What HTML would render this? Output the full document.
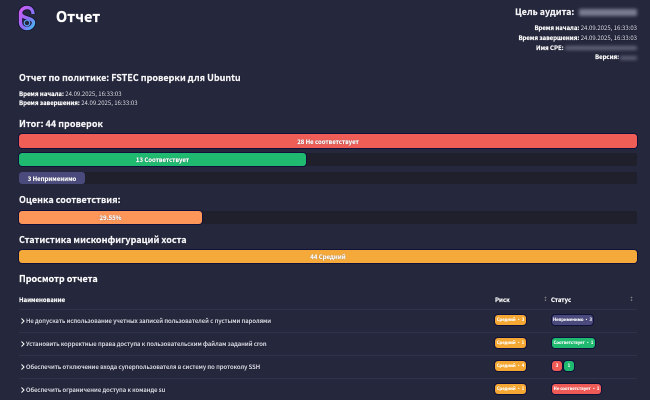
<!DOCTYPE html>
<html lang="ru"><head><meta charset="utf-8"><title>Отчет</title>
<style>
html,body{margin:0;padding:0;width:650px;height:400px;overflow:hidden;background:#25273c;}
body{position:relative;font-family:"Noto Sans CJK SC","DejaVu Sans",sans-serif;color:#fff;}
.t{position:absolute;white-space:nowrap;line-height:1;text-shadow:0 0 1px #05051a;}
.b{font-weight:700}
.h{font-size:9px;font-weight:700;color:#f6f6f8;-webkit-text-stroke:.2px #f6f6f8}
.s{font-size:6px;color:#e8e8ee}
.s b{font-weight:700;color:#fff;-webkit-text-stroke:.2px #fff}
.r{text-align:right;right:13px}
.track{position:absolute;left:19px;width:618px;background:#1f202c;border-radius:2px}
.bar{position:absolute;left:19px;border-radius:3px;box-shadow:0 0 0 1px #10113a;font-size:6px;font-weight:700;color:#fff;text-align:center;text-shadow:0 0 1px rgba(0,0,30,.6);display:flex;align-items:center;justify-content:center;-webkit-text-stroke:.15px #fff}
.line{position:absolute;left:19px;width:618px;height:1px;background:#30324c}
.row{position:absolute;left:19px;font-size:5.9px;font-weight:500;color:#e2e2ea;white-space:nowrap;line-height:1;text-shadow:0 0 1px #05051a;-webkit-text-stroke:.1px #e2e2ea}
.row svg{position:absolute;left:1px;top:0}
.row span{margin-left:7px}
.pill{position:absolute;height:10px;border-radius:3px;box-shadow:0 0 0 1px #10113a;font-size:4.2px;color:#fff;display:flex;align-items:center;justify-content:center;white-space:nowrap;font-weight:700;-webkit-text-stroke:.1px #fff}
.am{background:#f5a733}.gr{background:#1fb96f}.rd{background:#ee5a55}.pu{background:#4a4a7c}
.blur{position:absolute;filter:blur(1.5px);border-radius:1px}
</style></head><body>

<svg style="position:absolute;left:18px;top:5px" width="18" height="26" viewBox="0 0 18 26">
<defs><linearGradient id="g" x1="0" y1="0" x2="1" y2="1"><stop offset="0" stop-color="#d35cf0"/><stop offset=".55" stop-color="#8f6cf5"/><stop offset="1" stop-color="#45b8f2"/></linearGradient></defs>
<g fill="none" stroke="#0d0e2a" stroke-width="5">
<path d="M15 9C15 4.500 12 2.500 9 2.500C5.500 2.500 2.500 5 2.500 8.500V17.500C2.500 21 5.500 23.500 9 23.500C12.500 23.500 15.500 21 15.500 17.500C15.500 12.500 3 13.500 3 8.500"/>
</g>
<g fill="none" stroke="url(#g)" stroke-width="3.400">
<path d="M15 9C15 4.500 12 2.500 9 2.500C5.500 2.500 2.500 5 2.500 8.500V17.500C2.500 21 5.500 23.500 9 23.500C12.500 23.500 15.500 21 15.500 17.500C15.500 12.500 3 13.500 3 8.500"/>
</g>
<circle cx="9" cy="18" r="2.800" fill="none" stroke="#5aa0f4" stroke-width="1.200"/>
</svg>

<div class="t b" style="left:56px;top:10px;font-size:14.500px;-webkit-text-stroke:.25px #fff">Отчет</div>

<div class="t b" style="left:515px;top:8px;font-size:8.900px;color:#f4f4f6;-webkit-text-stroke:.2px #f4f4f6">Цель аудита:</div>
<div class="blur" style="left:579px;top:9px;width:58px;height:7px;background:#7a7c92"></div>
<div class="t s r" style="top:25px"><b>Время начала:</b> 24.09.2025, 16:33:03</div>
<div class="t s r" style="top:35px"><b>Время завершения:</b> 24.09.2025, 16:33:03</div>
<div class="t s" style="left:536px;top:45px"><b>Имя CPE:</b></div>
<div class="blur" style="left:565px;top:46px;width:72px;height:4px;background:#62647a"></div>
<div class="t s" style="left:595px;top:54px"><b>Версия:</b></div>
<div class="blur" style="left:620px;top:56px;width:17px;height:4px;background:#5c5e74"></div>

<div class="t h" style="left:19px;top:73px">Отчет по политике: FSTEC проверки для Ubuntu</div>
<div class="t s" style="left:19px;top:91px"><b>Время начала:</b> 24.09.2025, 16:33:03</div>
<div class="t s" style="left:19px;top:100px"><b>Время завершения:</b> 24.09.2025, 16:33:03</div>

<div class="t h" style="left:19px;top:119px">Итог: 44 проверок</div>
<div class="bar" style="top:134px;width:618px;height:14px;background:#ee5d56">28 Не соответствует</div>
<div class="track" style="top:153px;height:13px"></div>
<div class="bar" style="top:153px;width:287px;height:13px;background:#1fb96f">13 Соответствует</div>
<div class="track" style="top:172px;height:12px"></div>
<div class="bar" style="top:172px;width:66px;height:12px;background:#4a4a7c;box-shadow:none">3 Неприменимо</div>

<div class="t h" style="left:19px;top:195px">Оценка соответствия:</div>
<div class="track" style="top:211px;height:13px"></div>
<div class="bar" style="top:211px;width:183px;height:13px;background:#fe965a">29.55%</div>

<div class="t h" style="left:19px;top:235px">Статистика мисконфигураций хоста</div>
<div class="bar" style="top:250px;width:618px;height:13px;background:#f5a93b">44 Средний</div>

<div class="t h" style="left:19px;top:274px;color:#fff;font-size:9px">Просмотр отчета</div>
<div class="t b" style="left:19px;top:296.500px;font-size:6px;-webkit-text-stroke:.2px #fff">Наименование</div>
<div class="t b" style="left:495px;top:296.500px;font-size:6px;-webkit-text-stroke:.2px #fff">Риск</div>
<div class="t" style="left:543px;top:297px;font-size:5px;color:#aaa">↕</div>
<div class="t b" style="left:551px;top:296.500px;font-size:6px;-webkit-text-stroke:.2px #fff">Статус</div>
<div class="t" style="left:629px;top:297px;font-size:5px;color:#aaa">↕</div>

<div class="line" style="top:309px"></div>
<div class="line" style="top:332px"></div>
<div class="line" style="top:355px"></div>
<div class="line" style="top:378px"></div>

<div class="row" style="top:318px"><svg width="6" height="7" viewBox="0 0 6 7"><path d="M1.500 .5L4 3L1.500 5.500" fill="none" stroke="#fff" stroke-width="1"/></svg><span>Не допускать использование учетных записей пользователей с пустыми паролями</span></div>
<div class="row" style="top:341px"><svg width="6" height="7" viewBox="0 0 6 7"><path d="M1.500 .5L4 3L1.500 5.500" fill="none" stroke="#fff" stroke-width="1"/></svg><span>Установить корректные права доступа к пользовательским файлам заданий cron</span></div>
<div class="row" style="top:364px"><svg width="6" height="7" viewBox="0 0 6 7"><path d="M1.500 .5L4 3L1.500 5.500" fill="none" stroke="#fff" stroke-width="1"/></svg><span>Обеспечить отключение входа суперпользователя в систему по протоколу SSH</span></div>
<div class="row" style="top:387px"><svg width="6" height="7" viewBox="0 0 6 7"><path d="M1.500 .5L4 3L1.500 5.500" fill="none" stroke="#fff" stroke-width="1"/></svg><span>Обеспечить ограничение доступа к команде su</span></div>

<div class="pill am" style="left:495px;top:315px;width:31px">Средний • 3</div>
<div class="pill pu" style="left:552px;top:315px;width:41px">Неприменимо • 3</div>
<div class="pill am" style="left:495px;top:338px;width:31px">Средний • 1</div>
<div class="pill gr" style="left:552px;top:338px;width:43px">Соответствует • 1</div>
<div class="pill am" style="left:495px;top:361px;width:31px">Средний • 4</div>
<div class="pill rd" style="left:552px;top:361px;width:10px">3</div>
<div class="pill gr" style="left:564px;top:361px;width:10px">1</div>
<div class="pill am" style="left:495px;top:384px;width:31px">Средний • 1</div>
<div class="pill rd" style="left:552px;top:384px;width:49px">Не соответствует • 1</div>

</body></html>
